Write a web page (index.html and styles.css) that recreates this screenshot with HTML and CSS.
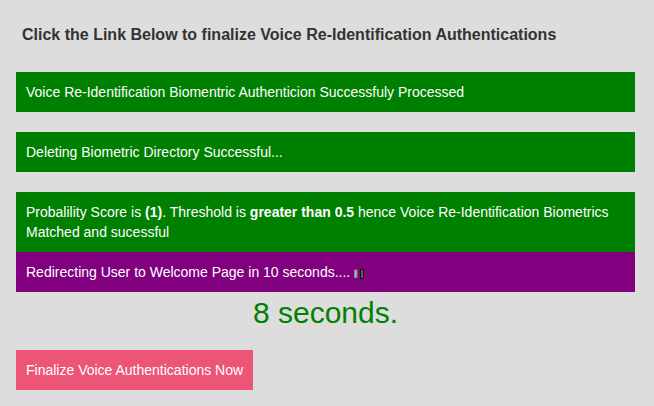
FILE: index.html
```html
<!DOCTYPE html>
<html lang="en">
<head>
<meta charset="utf-8">
<title>Voice Re-Identification</title>
<link rel="stylesheet" href="styles.css">
</head>
<body>
<div class="page">
  <h3 class="title">Click the Link Below to finalize Voice Re-Identification Authentications</h3>
  <div class="msg msg-green">Voice Re-Identification Biomentric Authenticion Successfuly Processed</div>
  <div class="msg msg-green">Deleting Biometric Directory Successful...</div>
  <div class="msg msg-green msg-flush">Probalility Score is <b>(1)</b>. Threshold is <b>greater than 0.5</b> hence Voice Re-Identification Biometrics Matched and sucessful</div>
  <div class="msg msg-purple">Redirecting User to Welcome Page in 10 seconds....<svg class="cursor" width="14" height="10" viewBox="0 0 14 10" aria-hidden="true"><rect x="4.5" y="1" width="2.5" height="7.5" fill="#b4b4b4" stroke="#858585" stroke-width="1"/><rect x="10.5" y="0.5" width="3" height="9" fill="#5a5a5a" stroke="#111" stroke-width="1"/></svg></div>
  <div class="countdown">8 seconds.</div>
  <a class="btn" href="#">Finalize Voice Authentications Now</a>
</div>
</body>
</html>
```
FILE: styles.css
```css
html, body {
  margin: 0;
  padding: 0;
  background: #dddddd;
}
body {
  font-family: "Liberation Sans", Arial, sans-serif;
  font-size: 14px;
  color: #333333;
}
.page {
  padding: 0 19px 16px 16px;
  display: flex;
  flex-direction: column;
  align-items: stretch;
}
.title {
  margin: 26px 0 28px 0;
  padding-left: 6px;
  font-size: 16px;
  line-height: 18px;
  font-weight: bold;
  color: #333333;
}
.msg {
  padding: 10px;
  line-height: 20px;
  color: #ffffff;
  margin-bottom: 20px;
}
.msg-flush {
  margin-bottom: 0;
}
.msg-green {
  background: #008000;
}
.msg-purple {
  background: #800080;
  margin-bottom: 0;
}
.msg b {
  font-weight: bold;
}
.cursor {
  vertical-align: -2px;
}
.countdown {
  margin-top: 4px;
  text-align: center;
  font-size: 30px;
  line-height: 34px;
  color: #008000;
}
.btn {
  align-self: flex-start;
  margin-top: 20px;
  padding: 10px;
  line-height: 20px;
  background: #ec5576;
  color: #ffffff;
  text-decoration: none;
}
```
